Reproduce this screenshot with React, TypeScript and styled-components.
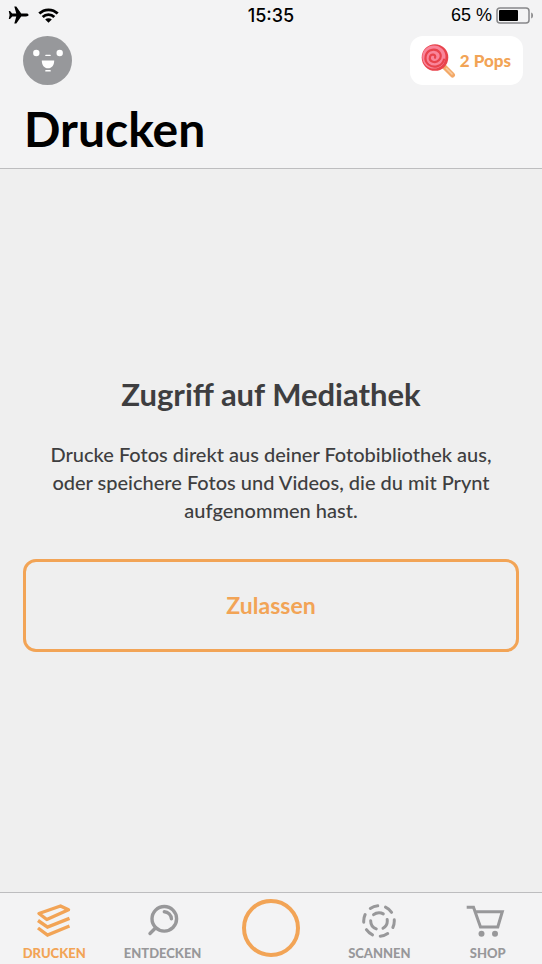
import React from "react";
import styled, { createGlobalStyle } from "styled-components";

const ORANGE = "#f2a456";
const GREY = "#98989a";

const GlobalStyle = createGlobalStyle`
  * { box-sizing: border-box; }
  body { margin: 0; background: #efefef; font-family: Lato, "Open Sans", sans-serif; color: #3e3e40; }
  button { font: inherit; cursor: pointer; }
`;

const Screen = styled.div`
  min-height: 100vh;
  display: flex;
  flex-direction: column;
`;

const Header = styled.header`
  background: #f3f3f4;
  border-bottom: 1px solid #bdbdbf;
  padding-bottom: 11px;
`;

const StatusBar = styled.div`
  display: grid;
  grid-template-columns: 1fr auto 1fr;
  align-items: center;
  height: 30px;
  padding: 0 8px;
  color: #000;
  font-family: Inter, "Liberation Sans", sans-serif;
  font-size: 18px;
`;

const StatusGroup = styled.div<{ $end?: boolean }>`
  display: flex;
  align-items: center;
  justify-content: ${(p) => (p.$end ? "flex-end" : "flex-start")};
  gap: ${(p) => (p.$end ? 4 : 9)}px;
`;

const Time = styled.time`
  font-weight: 500;
`;

const Percent = styled.span`
  font-family: "Liberation Sans", sans-serif;
`;

const TopRow = styled.div`
  display: flex;
  align-items: center;
  justify-content: space-between;
  padding: 6px 19px 0 23px;
`;

const AvatarButton = styled.button`
  display: flex;
  padding: 0;
  border: 0;
  background: none;
`;

const PopsButton = styled.button`
  display: flex;
  align-items: center;
  gap: 4px;
  height: 49px;
  padding: 0 12px 0 10px;
  border: 0;
  border-radius: 13px;
  background: #fff;
  color: ${ORANGE};
  && { font-size: 17px; font-weight: 900; }
`;

const Title = styled.h1`
  margin: 16px 24px 0;
  color: #000;
  font-size: 48px;
  line-height: 56px;
  font-weight: 700;
`;

const Main = styled.main`
  flex: 1;
  display: flex;
  flex-direction: column;
  justify-content: center;
  padding: 0 23px 34px;
  text-align: center;
`;

const Heading = styled.h2`
  margin: 0 0 28px;
  font-size: 31px;
  line-height: 36px;
  font-weight: 700;
`;

const Message = styled.p`
  margin: 0 24px 35px;
  font-size: 20px;
  line-height: 28px;
  font-weight: 500;
`;

const AllowButton = styled.button`
  height: 93px;
  border: 3px solid ${ORANGE};
  border-radius: 13px;
  background: transparent;
  color: ${ORANGE};
  && { font-size: 23px; font-weight: 700; }
`;

const TabBar = styled.nav`
  display: grid;
  grid-template-columns: repeat(5, 1fr);
  height: 72px;
  background: #f3f3f4;
  border-top: 1px solid #bdbdbf;
`;

const Tab = styled.button<{ $active?: boolean }>`
  display: flex;
  flex-direction: column;
  align-items: center;
  gap: 6px;
  padding: 10px 0 0;
  border: 0;
  background: none;
  color: ${(p) => (p.$active ? ORANGE : GREY)};
  && { font-size: 13px; line-height: 16px; font-weight: 900; }
`;

const CaptureButton = styled.button`
  justify-self: center;
  width: 58px;
  height: 58px;
  margin-top: 6px;
  border: 4px solid ${ORANGE};
  border-radius: 50%;
  background: transparent;
`;

const Plane = () => (
  <svg width="21" height="20" viewBox="0 0 21 20" aria-label="Flugmodus">
    <path d="M20.500 10c0-1-1-1.400-2.500-1.400h-4.800L8.300 1.500H6.300l2 7.100H4.200L2 6H.8l.8 4-.8 4H2l2.200-2.600h4.100l-2 7.100h2l4.900-7.100H18c1.500 0 2.500-.4 2.500-1.400z" />
  </svg>
);

const Wifi = () => (
  <svg width="21" height="15" viewBox="0 0 21 15" aria-label="WLAN">
    <g fill="none" stroke="#000" strokeWidth="2.800">
      <path d="M1.300 5.600a13 13 0 0 1 18.400 0" />
      <path d="M4.700 9.100a8.200 8.200 0 0 1 11.600 0" />
    </g>
    <path d="M7.200 11.500a4.700 4.700 0 0 1 6.600 0L10.500 14.800z" />
  </svg>
);

const Battery = () => (
  <svg width="38" height="17" viewBox="0 0 38 17" aria-label="Batterie">
    <rect x="1" y="1" width="32" height="15" rx="3" fill="none" stroke="#88888a" strokeWidth="1.500" />
    <rect x="3" y="3" width="19" height="11" rx="1" />
    <path d="M35.200 5.500c2.400.5 2.400 5.500 0 6z" fill="#88888a" />
  </svg>
);

const Avatar = () => (
  <svg width="49" height="49" viewBox="0 0 49 49" aria-hidden="true">
    <circle cx="24.500" cy="24.500" r="24.500" fill="#97989b" />
    <g fill="#fff">
      <circle cx="13.300" cy="17" r="3.200" />
      <circle cx="36.700" cy="17" r="3.200" />
      <path d="M18.800 24.500h12.400c0 4.700-2.400 7.800-6.200 7.800s-6.200-3.100-6.200-7.800z" />
      <rect x="22.200" y="18.700" width="5.600" height="1.400" rx=".7" />
      <rect x="22.200" y="34" width="5.600" height="1.600" rx=".7" />
    </g>
  </svg>
);

const Lollipop = () => (
  <svg width="36" height="36" viewBox="0 0 36 36" aria-hidden="true">
    <path d="M23 22.500L32.500 32" stroke="#f3a968" strokeWidth="5" strokeLinecap="round" />
    <path d="M26 25l6.500 6.500" stroke="#f9cda0" strokeWidth="1.600" />
    <circle cx="15" cy="14.500" r="13.300" fill="#e8434c" />
    <circle cx="13.900" cy="14" r="11.600" fill="#f9859a" />
    <path d="M15 14.700c1.500-3.500-4-4.300-5-1-1.400 5 5.500 7.300 9 3.400 4.500-5-.5-11.400-6.800-10.300C5 8 3.300 17 8.500 21.500c5.500 4.500 13.800 1.500 15.500-5" fill="none" stroke="#e8434c" strokeWidth="2.200" strokeLinecap="round" />
  </svg>
);

const iconProps = {
  width: 36,
  height: 36,
  viewBox: "0 0 36 36",
  fill: "none",
  stroke: "currentColor",
  strokeWidth: 3.4,
  "aria-hidden": true,
} as const;

const Layers = () => (
  <svg {...iconProps}>
    <path d="M3 10.500L24.500 3L32.500 6.800L10.800 16.500z" strokeLinejoin="round" />
    <path d="M2 17.500L11.500 24.200L33.500 15.300M2 25L11.500 32L33.500 23" />
  </svg>
);

const Search = () => (
  <svg {...iconProps}>
    <circle cx="19.300" cy="15.800" r="12.300" />
    <path d="M10.700 24.800L5 30.500M19.300 8.800a7.300 7.300 0 0 1 7.100 7" strokeLinecap="round" />
  </svg>
);

const Scan = () => (
  <svg {...iconProps} strokeWidth="3">
    <circle cx="18" cy="18" r="15.300" pathLength="60" strokeDasharray="5 5" strokeDashoffset="0.8" strokeLinecap="round" />
    <circle cx="18" cy="18" r="8.300" pathLength="30" strokeDasharray="6 4" strokeDashoffset="0.9" strokeLinecap="round" />
  </svg>
);

const Cart = () => (
  <svg {...iconProps} width="44" viewBox="-4 0 44 36" strokeWidth="3">
    <path d="M-3.300 4.300H3.500L10.500 24H27.800L32.300 8.700H5.500" />
    <circle cx="11.500" cy="30.700" r="3" fill="currentColor" stroke="none" />
    <circle cx="25" cy="30.700" r="3" fill="currentColor" stroke="none" />
  </svg>
);

export default function App() {
  return (
    <Screen>
      <GlobalStyle />
      <Header>
        <StatusBar>
          <StatusGroup><Plane /><Wifi /></StatusGroup>
          <Time>15:35</Time>
          <StatusGroup $end><Percent>65 %</Percent><Battery /></StatusGroup>
        </StatusBar>
        <TopRow>
          <AvatarButton aria-label="Profil"><Avatar /></AvatarButton>
          <PopsButton><Lollipop />2 Pops</PopsButton>
        </TopRow>
        <Title>Drucken</Title>
      </Header>
      <Main>
        <Heading>Zugriff auf Mediathek</Heading>
        <Message>
          Drucke Fotos direkt aus deiner Fotobibliothek aus, oder speichere Fotos und Videos, die du mit Prynt
          aufgenommen hast.
        </Message>
        <AllowButton>Zulassen</AllowButton>
      </Main>
      <TabBar>
        <Tab $active aria-current="page"><Layers />DRUCKEN</Tab>
        <Tab><Search />ENTDECKEN</Tab>
        <CaptureButton aria-label="Aufnehmen" />
        <Tab><Scan />SCANNEN</Tab>
        <Tab><Cart />SHOP</Tab>
      </TabBar>
    </Screen>
  );
}
